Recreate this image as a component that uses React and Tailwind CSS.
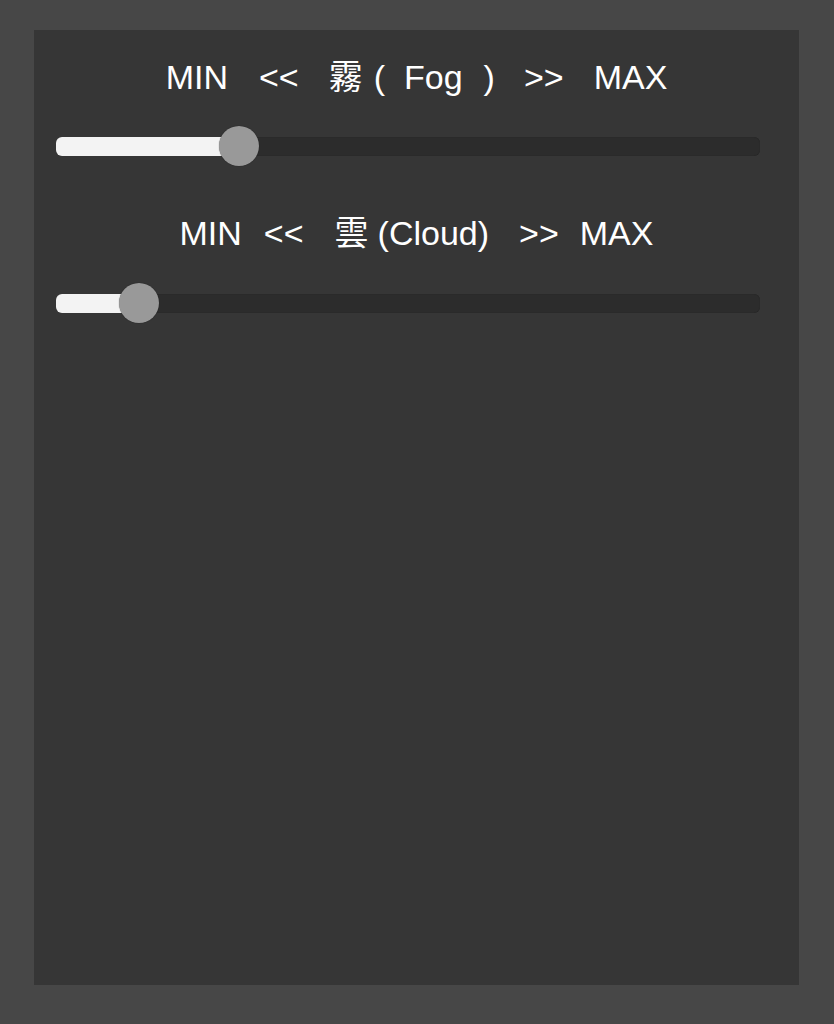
import React from 'react';

const font = { fontFamily: '"Liberation Sans", "Noto Sans CJK JP", sans-serif' };

function Slider({ value }) {
  // thumb travels inside the track, fill runs up to thumb center
  const pos = 20 + (664 * value) / 100;
  return (
    <div className="relative h-[19px] w-[704px] rounded-[6px] bg-[#2c2c2c] shadow-[inset_0_0_1px_rgba(0,0,0,0.4)]">
      <div className="absolute left-0 top-0 h-full rounded-l-[6px] bg-[#f3f3f3]" style={{ width: pos }} />
      <div
        className="absolute top-[-11px] h-[40px] w-[40px] -translate-x-1/2 rounded-full bg-[#999999] shadow-[0_0_1px_rgba(0,0,0,0.6)]"
        style={{ left: pos }}
      />
    </div>
  );
}

export default function App() {
  return (
    <div className="min-h-[1024px] w-full bg-[#474747] pt-[30px]" style={font}>
      <div className="ml-[34px] flex h-[955px] w-[765px] flex-col bg-[#363636] pl-[22px]">
        <div className="mt-[28px] flex h-[38px] w-[721px] items-center justify-center text-[34px] leading-none text-white">
          <span>MIN</span>
          <span className="ml-[31px]">&lt;&lt;</span>
          <span className="ml-[30px]">霧</span>
          <span className="ml-[11px]">(</span>
          <span className="ml-[19px]">Fog</span>
          <span className="ml-[21px]">)</span>
          <span className="ml-[29px]">&gt;&gt;</span>
          <span className="ml-[30px]">MAX</span>
        </div>
        <div className="mt-[41px]">
          <Slider value={24.5} />
        </div>
        <div className="mt-[58px] flex h-[38px] w-[721px] items-center justify-center text-[34px] leading-none text-white">
          <span>MIN</span>
          <span className="ml-[22px]">&lt;&lt;</span>
          <span className="ml-[31px]">雲</span>
          <span className="ml-[9px]">(Cloud)</span>
          <span className="ml-[30px]">&gt;&gt;</span>
          <span className="ml-[21px]">MAX</span>
        </div>
        <div className="mt-[42px]">
          <Slider value={9.5} />
        </div>
      </div>
    </div>
  );
}
